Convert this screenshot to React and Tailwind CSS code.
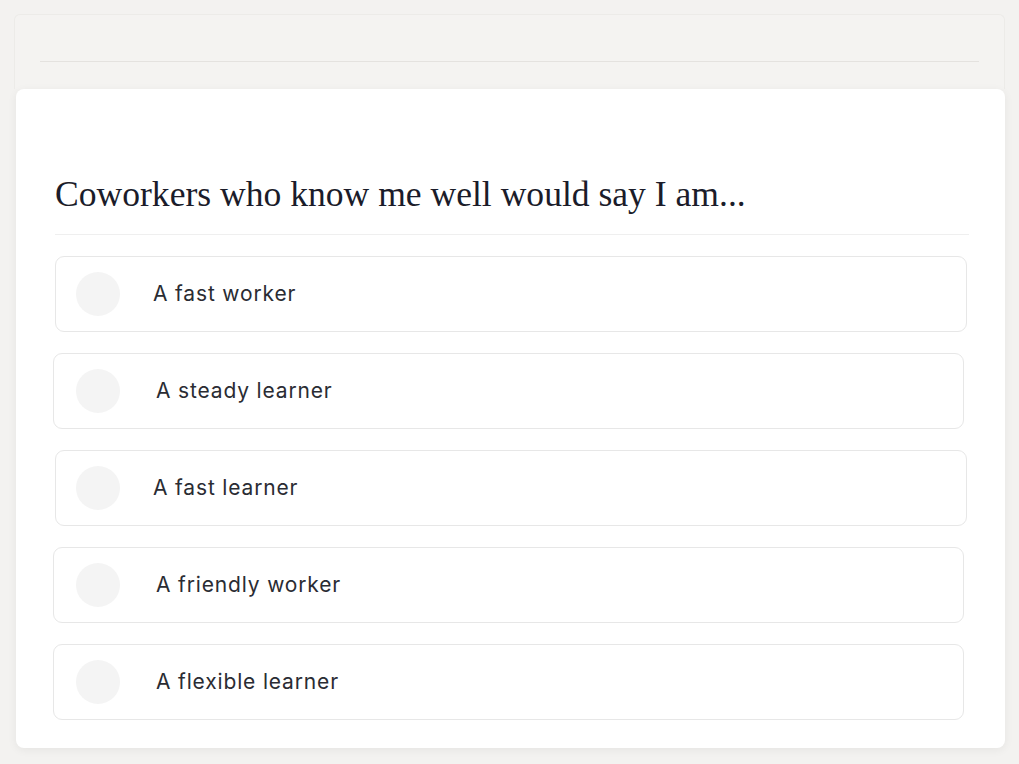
import React from 'react';

const options = [
  { label: 'A fast worker', offset: false },
  { label: 'A steady learner', offset: true },
  { label: 'A fast learner', offset: false },
  { label: 'A friendly worker', offset: true },
  { label: 'A flexible learner', offset: true },
];

export default function App() {
  return (
    <div className="min-h-screen bg-[#f3f2f0] px-[14px] pt-[14px]" style={{ fontFamily: 'Inter, "Noto Sans", sans-serif' }}>
      {/* faded header panel */}
      <div className="h-[75px] rounded-t-md border border-b-0 border-[#ecebe8] bg-[#f4f3f1] px-[25px] pt-[46px]">
        <div className="h-px bg-[#e4e2df]" />
      </div>

      {/* question card */}
      <div className="ml-[2px] rounded-lg bg-white px-[39px] pb-[28px] pt-[88px] shadow-[0_2px_10px_rgba(0,0,0,0.06)]">
        <h1
          className="text-[35.6px] leading-none text-[#1b1c2a]"
          style={{ fontFamily: '"Liberation Serif", "DejaVu Serif", serif' }}
        >
          Coworkers who know me well would say I am...
        </h1>
        <div className="mt-[21px] mr-[-3px] h-px bg-[#efefef]" />

        <div className="mt-[21px] flex flex-col gap-[21px]">
          {options.map((o) => (
            <div
              key={o.label}
              className={
                o.offset
                  ? 'ml-[-2px] mr-[2px] flex h-[76px] items-center rounded-[9px] border border-[#e7e7e7] bg-white pl-[22px]'
                  : 'mr-[-1px] flex h-[76px] items-center rounded-[9px] border border-[#e7e7e7] bg-white pl-[20px]'
              }
            >
              <div className="h-[44px] w-[44px] shrink-0 rounded-full bg-[#f4f4f4]" />
              <span
                className={
                  o.offset
                    ? 'ml-[36px] text-[21px] tracking-[0.04em] text-[#2a2c33]'
                    : 'ml-[33px] text-[21px] tracking-[0.04em] text-[#2a2c33]'
                }
              >
                {o.label}
              </span>
            </div>
          ))}
        </div>
      </div>
    </div>
  );
}
